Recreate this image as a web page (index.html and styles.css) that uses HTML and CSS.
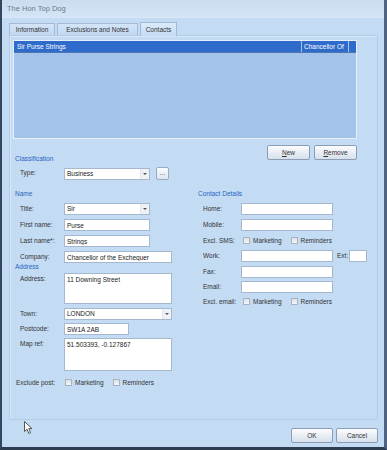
FILE: index.html
```html
<!DOCTYPE html>
<html>
<head>
<meta charset="utf-8">
<link rel="stylesheet" href="styles.css">
</head>
<body>

<div class="window">
  <div class="titlebar">The Hon Top Dog</div>

  <div class="tabs">
    <span class="tab t-info">Information</span>
    <span class="tab t-excl">Exclusions and Notes</span>
    <span class="tab t-cont active">Contacts</span>
  </div>

  <div class="panel">
    <!-- contact list -->
    <div class="listbox">
      <div class="row-sel">
        <span class="col-name">Sir Purse Strings</span>
        <span class="col-job">Chancellor Of</span>
        <span class="col-end"></span>
      </div>
    </div>

    <div class="toprow">
      <span class="group g-class">Classification</span>
      <div class="btns">
        <button class="btn"><u>N</u>ew</button>
        <button class="btn"><u>R</u>emove</button>
      </div>
    </div>

    <div class="form">
      <div class="field f-type">
        <label>Type:</label>
        <div class="combo w86"><span>Business</span><i></i></div>
        <button class="dots">...</button>
      </div>

      <div class="cols">
        <div class="col col-left">
          <div class="group g-top">Name</div>
          <div class="field mt5"><label>Title:</label><div class="combo w86"><span>Sir</span><i></i></div></div>
          <div class="field"><label>First name:</label><input class="w86" value="Purse"></div>
          <div class="field"><label>Last name*:</label><input class="w86" value="Strings"></div>
          <div class="field"><label>Company:</label><input class="w108" value="Chancellor of the Exchequer"></div>
          <div class="group g-addr">Address</div>
          <div class="field mt3"><label>Address:</label><textarea class="w108 h31">11 Downing Street</textarea></div>
          <div class="field"><label>Town:</label><div class="combo w108"><span>LONDON</span><i></i></div></div>
          <div class="field mt3"><label>Postcode:</label><input class="w65" value="SW1A 2AB"></div>
          <div class="field mt3"><label>Map ref:</label><textarea class="w108 h33">51.503393, -0.127867</textarea></div>
          <div class="checks c-post">
            <label>Exclude post:</label>
            <span class="cb"></span><span class="ct">Marketing</span>
            <span class="cb cb2"></span><span class="ct">Reminders</span>
          </div>
        </div>

        <div class="col col-right">
          <div class="group g-top">Contact Details</div>
          <div class="field mt5"><label>Home:</label><input class="w92"></div>
          <div class="field"><label>Mobile:</label><input class="w92"></div>
          <div class="checks mt4">
            <label>Excl. SMS:</label>
            <span class="cb"></span><span class="ct">Marketing</span>
            <span class="cb cb2"></span><span class="ct">Reminders</span>
          </div>
          <div class="field mt5"><label>Work:</label><input class="w92"><span class="ext">Ext:</span><input class="w18"></div>
          <div class="field"><label>Fax:</label><input class="w92"></div>
          <div class="field mt3"><label>Email:</label><input class="w92"></div>
          <div class="checks mt3">
            <label>Excl. email:</label>
            <span class="cb"></span><span class="ct">Marketing</span>
            <span class="cb cb2"></span><span class="ct">Reminders</span>
          </div>
        </div>
      </div>
    </div>
  </div>

  <div class="footer">
    <button class="btn">OK</button>
    <button class="btn">Cancel</button>
  </div>

  <!-- mouse pointer -->
  <svg class="cursor" width="10" height="14" viewBox="0 0 10 14">
    <path d="M0.5 0.5 L0.5 10.5 L3 8.2 L4.8 12.5 L6.6 11.7 L4.8 7.6 L8 7.6 Z" fill="#fff" stroke="#555" stroke-width="1"/>
  </svg>
</div>

</body>
</html>
```

FILE: styles.css
```css
* {
  box-sizing: border-box;
}

body {
  margin: 0;
  background: #c4dbf4;
  font-family: "Liberation Sans", Arial, sans-serif;
  font-size: 6.5px;
  color: #333;
}

/* Dialog frame */
.window {
  position: relative;
  width: 387px;
  height: 450px;
  background: #c4dbf4;
  border-left: 2px solid #35475f;
  border-right: 3px solid #4f6480;
  border-bottom: 3px solid #2e3d52;
}

.titlebar {
  height: 18px;
  line-height: 18px;
  padding-left: 5px;
  font-size: 7.5px;
  color: #6d7c8f;
  background: linear-gradient(#cbdcef, #d5e5f6);
  border-bottom: 1px solid #d9e7f6;
}

/* Tabs */
.tabs {
  display: flex;
  align-items: flex-end;
  height: 13px;
  margin: 4px 0 0 7px;
}

.tab {
  height: 12px;
  line-height: 11px;
  text-align: center;
  color: #333;
  background: linear-gradient(#d3e4f7, #c2d8f1);
  border: 1px solid #a2bad6;
  border-bottom: none;
  margin-right: 2px;
}

.t-info { width: 46px; }
.t-excl { width: 81px; }
.t-cont { width: 37px; }

.tab.active {
  position: relative;
  z-index: 1;
  height: 14px;
  line-height: 13px;
  margin-bottom: -1px;
  background: linear-gradient(#dcebfb, #c4dbf4);
}

.panel {
  margin-left: 7px;
  width: 369px;
  height: 385px;
  border: 1px solid #b3cbe7;
  box-shadow: inset 1px 1px 0 #d8e7f8;
}

/* Contact list */
.listbox {
  margin: 4px 0 0 3px;
  width: 344px;
  height: 99px;
  background: #a3c3eb;
  border: 1px solid #e6effa;
}

.row-sel {
  display: flex;
  height: 12px;
  line-height: 11px;
  color: #fff;
  background: #2f6bcb;
  border-bottom: 1px solid #4f76ad;
}

.col-name {
  width: 287px;
  padding-left: 3px;
}

.col-job {
  width: 47px;
  padding-left: 2px;
  border-left: 1px solid #a9c4e8;
}

.col-end {
  flex: 1;
  border-left: 1px solid #a9c4e8;
}

.toprow {
  display: flex;
  align-items: flex-end;
  width: 347px;
  height: 15px;
  margin-top: 6px;
  padding-left: 5px;
}

.btns {
  display: flex;
  gap: 4px;
  margin-left: auto;
}

.btn {
  width: 43px;
  height: 15px;
  padding: 0;
  font: inherit;
  color: #333;
  border: 1px solid #8c9eb5;
  border-radius: 2px;
  background: linear-gradient(#fbfcfe, #e9eef5 50%, #d6e0ec);
}

.btn u {
  text-decoration: underline;
}

/* Section captions */
.group {
  color: #2764c0;
  line-height: 8px;
}

.g-class {
  margin-bottom: -3px;
}

.g-top {
  margin-top: 10px;
}

.g-addr {
  line-height: 7px;
}

/* Form rows */
.form {
  padding-left: 5px;
}

.cols {
  display: flex;
}

.col-left {
  width: 183px;
}

.col-right {
  flex: 1;
}

.field {
  display: flex;
  align-items: flex-start;
  margin-top: 4px;
  padding-left: 5px;
}

.field label {
  width: 44px;
  line-height: 12px;
  flex-shrink: 0;
}

.col-right .field label {
  width: 38px;
}

.f-type {
  margin-top: 7px;
  height: 13px;
}

.f-type .combo {
  margin-top: 1px;
}

.mt3 { margin-top: 3px; }
.mt4 { margin-top: 4px; }
.mt5 { margin-top: 5px; }

input,
textarea,
.combo {
  height: 12px;
  margin: 0;
  padding: 0 2px;
  font: inherit;
  color: #222;
  background: #fff;
  border: 1px solid #a6b8ce;
  border-radius: 0;
  outline: none;
}

textarea {
  resize: none;
  overflow: hidden;
  padding-top: 2px;
  line-height: 8px;
}

.combo {
  display: flex;
  line-height: 10px;
  padding-right: 0;
}

.combo span {
  flex: 1;
}

.combo i {
  position: relative;
  width: 9px;
  background: #eef2f7;
  border-left: 1px solid #dfe6ef;
}

.combo i::after {
  content: "";
  position: absolute;
  left: 2px;
  top: 4px;
  border-left: 2px solid transparent;
  border-right: 2px solid transparent;
  border-top: 2px solid #555;
}

.dots {
  width: 13px;
  height: 13px;
  margin-left: 6px;
  padding: 0 0 3px;
  font: inherit;
  color: #444;
  border: 1px solid #9aabc0;
  border-radius: 2px;
  background: linear-gradient(#fbfcfe, #dde5ef);
}

.w18 { width: 18px; }
.w65 { width: 65px; }
.w86 { width: 86px; }
.w92 { width: 92px; }
.w108 { width: 108px; }
.h31 { height: 31px; }
.h33 { height: 33px; }

.ext {
  width: 12px;
  margin-left: 4px;
  line-height: 12px;
}

/* Checkbox rows */
.checks {
  display: flex;
  align-items: center;
  height: 10px;
  padding-left: 5px;
}

.checks label {
  width: 38px;
}

.c-post {
  margin-top: 6px;
  padding-left: 1px;
}

.c-post label {
  width: 49px;
}

.cb {
  width: 7px;
  height: 7px;
  margin-left: 2px;
  border: 1px solid #a9b2bd;
  background: linear-gradient(#dde2e8, #f4f6f8);
}

.c-post .cb {
  margin-left: 0;
}

.ct {
  margin-left: 3px;
}

.checks .cb2 {
  margin-left: 9px;
}

/* Dialog buttons */
.footer {
  display: flex;
  justify-content: flex-end;
  gap: 3px;
  margin-top: 8px;
  padding-right: 6px;
}

.footer .btn {
  width: 42px;
}

.cursor {
  position: absolute;
  left: 22px;
  top: 421px;
}
```
